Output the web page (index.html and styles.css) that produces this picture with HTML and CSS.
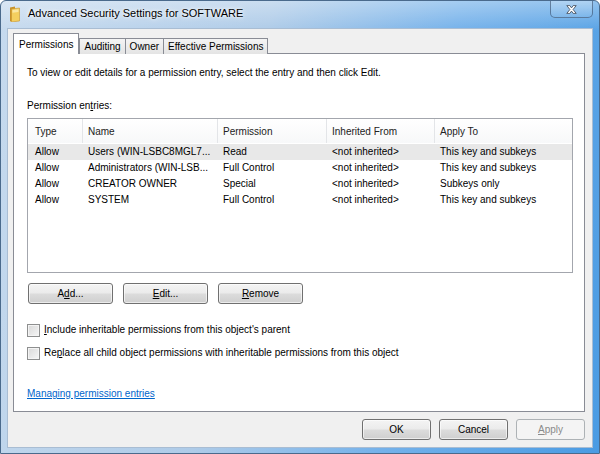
FILE: index.html
```html
<!DOCTYPE html>
<html lang="en">
<head>
  <meta charset="UTF-8">
  <title>Advanced Security Settings for SOFTWARE</title>
  <link rel="stylesheet" href="styles.css">
</head>
<body>
  <div class="window">
    <div class="titlebar">
      <svg class="folder-icon" width="12" height="16" viewBox="0 0 12 16">
        <path d="M1 1.5 L6 0.5 L6 14.5 L1 15.5 Z" fill="#c8922a"/>
        <path d="M2.5 3 L10.5 2 L10.5 15 L2.5 16 Z" fill="#f4cf5f" stroke="#c9962c" stroke-width="0.6"/>
        <path d="M3.5 4 L9.5 3.2 L9.5 6 L3.5 6.8 Z" fill="#fbe7a2"/>
      </svg>
      <span class="title">Advanced Security Settings for SOFTWARE</span>
      <div class="close-btn">
        <svg width="11" height="9" viewBox="0 0 11 9">
          <path d="M0.8 0.6 L3.8 0.6 L5.5 2.9 L7.2 0.6 L10.2 0.6 L7.1 4.5 L10.2 8.4 L7.2 8.4 L5.5 6.1 L3.8 8.4 L0.8 8.4 L3.9 4.5 Z" fill="#fff" stroke="#3a4350" stroke-width="0.8"/>
        </svg>
      </div>
    </div>

    <div class="client">
      <div class="tabs">
        <div class="tab active">Permissions</div>
        <div class="tab">Auditing</div>
        <div class="tab">Owner</div>
        <div class="tab">Effective Permissions</div>
      </div>

      <div class="panel">
        <p class="intro">To view or edit details for a permission entry, select the entry and then click Edit.</p>
        <div class="entries-label">Permission en<u>t</u>ries:</div>

        <div class="list">
          <div class="list-row list-header">
            <span class="cell">Type</span>
            <span class="cell">Name</span>
            <span class="cell">Permission</span>
            <span class="cell">Inherited From</span>
            <span class="cell">Apply To</span>
          </div>
          <div class="list-row selected">
            <span class="cell">Allow</span>
            <span class="cell">Users (WIN-LSBC8MGL7...</span>
            <span class="cell">Read</span>
            <span class="cell">&lt;not inherited&gt;</span>
            <span class="cell">This key and subkeys</span>
          </div>
          <div class="list-row">
            <span class="cell">Allow</span>
            <span class="cell">Administrators (WIN-LSB...</span>
            <span class="cell">Full Control</span>
            <span class="cell">&lt;not inherited&gt;</span>
            <span class="cell">This key and subkeys</span>
          </div>
          <div class="list-row">
            <span class="cell">Allow</span>
            <span class="cell">CREATOR OWNER</span>
            <span class="cell">Special</span>
            <span class="cell">&lt;not inherited&gt;</span>
            <span class="cell">Subkeys only</span>
          </div>
          <div class="list-row">
            <span class="cell">Allow</span>
            <span class="cell">SYSTEM</span>
            <span class="cell">Full Control</span>
            <span class="cell">&lt;not inherited&gt;</span>
            <span class="cell">This key and subkeys</span>
          </div>
        </div>

        <div class="list-buttons">
          <button class="btn">A<u>d</u>d...</button>
          <button class="btn"><u>E</u>dit...</button>
          <button class="btn"><u>R</u>emove</button>
        </div>

        <label class="check first">
          <span class="box"></span>
          <span><u>I</u>nclude inheritable permissions from this object's parent</span>
        </label>
        <label class="check">
          <span class="box"></span>
          <span>Re<u>p</u>lace all child object permissions with inheritable permissions from this object</span>
        </label>

        <a class="help-link" href="#">Managing permission entries</a>
      </div>

      <div class="footer">
        <button class="btn wide">OK</button>
        <button class="btn wide">Cancel</button>
        <button class="btn wide disabled"><u>A</u>pply</button>
      </div>
    </div>
  </div>
</body>
</html>
```

FILE: styles.css
```css
body {
  margin: 0;
  font-family: "Liberation Sans", Arial, sans-serif;
  font-size: 10px;
  letter-spacing: 0;
  color: #000;
}

.window {
  width: 600px;
  height: 454px;
  box-sizing: border-box;
  border: 1px solid #4a6a8c;
  border-radius: 6px 6px 0 0;
  padding: 0 6px 5px 6px;
  display: flex;
  flex-direction: column;
  background:
    linear-gradient(180deg, rgba(255, 255, 255, 0.35) 0%, rgba(255, 255, 255, 0) 30px),
    linear-gradient(100deg, #c6daee 0%, #aecbe8 40%, #74b1ea 68%, #4a9be3 100%);
  overflow: hidden;
}

.titlebar {
  height: 27px;
  flex-shrink: 0;
  display: flex;
  align-items: flex-start;
}

.folder-icon {
  margin: 5px 0 0 2px;
}

.title {
  margin: 6px 0 0 7px;
  font-size: 11px;
  color: #000;
  text-shadow: 0 0 6px #fff, 0 0 3px #fff;
}

.close-btn {
  margin-left: auto;
  width: 43px;
  height: 17px;
  box-sizing: border-box;
  border: 1px solid rgba(40, 60, 90, 0.55);
  border-top: none;
  border-radius: 0 0 5px 5px;
  background: linear-gradient(180deg, rgba(255, 255, 255, 0.25), rgba(255, 255, 255, 0.05));
  display: flex;
  align-items: center;
  justify-content: center;
}

.client {
  flex: 1;
  background: #f0f0f0;
  border: 1px solid #a9bdd3;
  padding: 5px 7px 0 5px;
  display: flex;
  flex-direction: column;
}

.tabs {
  display: flex;
  align-items: flex-end;
  height: 20px;
  position: relative;
  z-index: 1;
}

.tab {
  height: 15px;
  line-height: 15px;
  padding: 0 4px;
  border: 1px solid #898c95;
  border-bottom: none;
  margin-left: -1px;
  background: linear-gradient(180deg, #f4f4f4, #e4e4e4);
  color: #000;
}

.tab.active {
  height: 20px;
  line-height: 22px;
  margin-left: 0;
  margin-right: 1px;
  padding: 0 5px;
  background: #fff;
}

.panel {
  height: 359px;
  box-sizing: border-box;
  background: #fff;
  border: 1px solid #898c95;
  margin-top: -1px;
  padding: 11px 11px 0 13px;
}

.intro {
  margin: 0;
  line-height: 16px;
}

.entries-label {
  margin-top: 17px;
  line-height: 16px;
}

.list {
  margin-top: 4px;
  height: 155px;
  box-sizing: border-box;
  border: 1px solid #a3a6ad;
}

.list-row {
  display: grid;
  grid-template-columns: 55px 135px 109px 108px 1fr;
  height: 16px;
  line-height: 16px;
}

.list-header {
  height: 24px;
  line-height: 25px;
  margin-bottom: 1px;
  background: linear-gradient(180deg, #fff, #f7f8f9);
  color: #222;
}

.list-header .cell {
  border-right: 1px solid #e3e5e8;
}

.list-header .cell:last-child {
  border-right: none;
}

.cell {
  padding-left: 5px;
  white-space: nowrap;
  overflow: hidden;
}

.cell:first-child {
  padding-left: 7px;
}

.list-row.selected {
  background: #e8e8e8;
}

.list-buttons {
  display: flex;
  gap: 10px;
  margin: 10px 0 0 1px;
}

.btn {
  width: 85px;
  height: 21px;
  padding: 0;
  font-family: inherit;
  font-size: 10px;
  color: #000;
  border: 1px solid #707070;
  border-radius: 3px;
  background: linear-gradient(180deg, #f4f4f4 0%, #ebebeb 48%, #dcdcdc 52%, #cfcfcf 100%);
  box-shadow: inset 0 0 0 1px rgba(255, 255, 255, 0.6);
}

.btn.wide {
  width: 69px;
}

.btn.disabled {
  color: #8a8a8a;
  border-color: #adb2b5;
  background: #f4f4f4;
  box-shadow: none;
}

.check {
  display: flex;
  align-items: center;
  gap: 4px;
  line-height: 16px;
  margin-top: 7px;
}

.check.first {
  margin-top: 18px;
}

.box {
  width: 11px;
  height: 11px;
  border: 1px solid #8e8f8f;
  background: linear-gradient(135deg, #d8d8d8, #f6f6f6);
  box-shadow: inset 0 0 0 1px #f4f4f4;
}

.help-link {
  display: inline-block;
  margin-top: 25px;
  line-height: 16px;
  color: #0066cc;
}

.footer {
  display: flex;
  justify-content: flex-end;
  gap: 8px;
  margin-top: 7px;
}
```
